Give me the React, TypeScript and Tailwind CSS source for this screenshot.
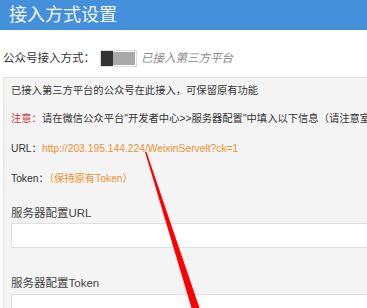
import React from "react";

const font = "font-['Liberation_Sans','Noto_Sans_CJK_SC',sans-serif]";

function Toggle() {
  return (
    <span className="ml-[5px] flex h-[17px] w-[37px] border border-[#dcdcdc] bg-white">
      <span className="w-[12px] bg-[#333]" />
      <span className="my-[1px] mr-[1px] flex-1 bg-[#a9a9a9]" />
    </span>
  );
}

function Arrow() {
  return (
    <svg
      className="pointer-events-none absolute left-0 top-0"
      width="367"
      height="308"
      viewBox="0 0 367 308"
    >
      <polygon points="145,152 146.5,152 199.5,308 191.5,308" fill="#ff0000" />
    </svg>
  );
}

export default function App() {
  return (
    <div className={`relative h-[308px] w-[367px] overflow-hidden bg-white ${font}`}>
      <div className="h-[30px] bg-[#4590db] pl-[9px] text-[18px] leading-[30px] text-[#f4f7fb]">
        接入方式设置
      </div>

      <div className="mt-[20px] flex h-[17px] items-center pl-[3px] text-[11.5px] text-[#333]">
        <span>公众号接入方式：</span>
        <Toggle />
        <span className="ml-[4px] italic text-[#8a8a8a]">已接入第三方平台</span>
      </div>

      <div className="ml-[3px] mt-[10px] flex w-[600px] flex-col border border-[#e2e2e2] bg-[#f4f4f4] pl-[7px] pt-[3px] text-[10.3px] leading-[20px] text-[#333]">
        <p>已接入第三方平台的公众号在此接入，可保留原有功能</p>
        <p className="mt-[8px] whitespace-nowrap">
          <span className="text-[#d0383a]">注意：</span>
          请在微信公众平台"开发者中心&gt;&gt;服务器配置"中填入以下信息（请注意室内设置正确）
        </p>
        <p className="mt-[10px]">
          URL：<span className="text-[#f0902f]">http://203.195.144.224/WeixinServelt?ck=1</span>
        </p>
        <p className="mt-[10px]">
          Token：<span className="text-[#f0902f]">（保持原有Token）</span>
        </p>

        <label className="mt-[14px] text-[11.5px] text-[#444]">服务器配置URL</label>
        <div className="h-[25px] border border-[#e0e0e0] bg-white" />

        <label className="mt-[25px] text-[11.5px] text-[#444]">服务器配置Token</label>
        <div className="mt-[1px] h-[25px] border border-[#e0e0e0] bg-white" />
      </div>

      <Arrow />
    </div>
  );
}
